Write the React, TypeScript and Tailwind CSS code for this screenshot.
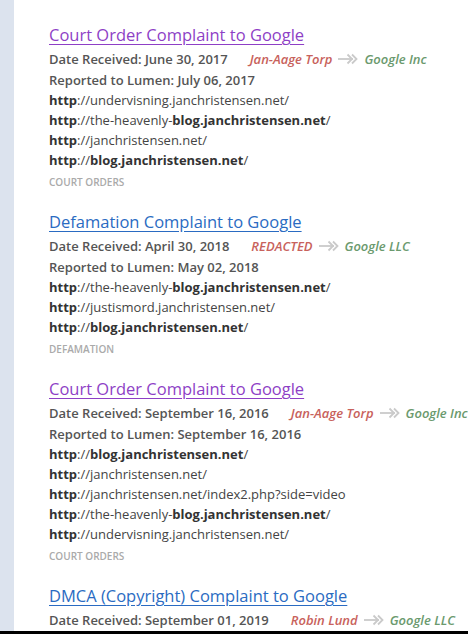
import React from 'react'

type Url = { pre: string; bold?: string; post?: string }

type Notice = {
  title: string
  visited: boolean
  received: string
  reported: string
  sender: string
  recipient: string
  urls: Url[]
  category: string
}

const notices: Notice[] = [
  {
    title: 'Court Order Complaint to Google',
    visited: true,
    received: 'June 30, 2017',
    reported: 'July 06, 2017',
    sender: 'Jan-Aage Torp',
    recipient: 'Google Inc',
    urls: [
      { pre: 'undervisning.janchristensen.net/' },
      { pre: 'the-heavenly-', bold: 'blog.janchristensen.net', post: '/' },
      { pre: 'janchristensen.net/' },
      { pre: '', bold: 'blog.janchristensen.net', post: '/' },
    ],
    category: 'Court Orders',
  },
  {
    title: 'Defamation Complaint to Google',
    visited: false,
    received: 'April 30, 2018',
    reported: 'May 02, 2018',
    sender: 'REDACTED',
    recipient: 'Google LLC',
    urls: [
      { pre: 'the-heavenly-', bold: 'blog.janchristensen.net', post: '/' },
      { pre: 'justismord.janchristensen.net/' },
      { pre: '', bold: 'blog.janchristensen.net', post: '/' },
    ],
    category: 'Defamation',
  },
  {
    title: 'Court Order Complaint to Google',
    visited: true,
    received: 'September 16, 2016',
    reported: 'September 16, 2016',
    sender: 'Jan-Aage Torp',
    recipient: 'Google Inc',
    urls: [
      { pre: '', bold: 'blog.janchristensen.net', post: '/' },
      { pre: 'janchristensen.net/' },
      { pre: 'janchristensen.net/index2.php?side=video' },
      { pre: 'the-heavenly-', bold: 'blog.janchristensen.net', post: '/' },
      { pre: 'undervisning.janchristensen.net/' },
    ],
    category: 'Court Orders',
  },
  {
    title: 'DMCA (Copyright) Complaint to Google',
    visited: false,
    received: 'September 01, 2019',
    reported: 'September 03, 2019',
    sender: 'Robin Lund',
    recipient: 'Google LLC',
    urls: [],
    category: 'DMCA',
  },
]

const Arrow = () => (
  <svg width="20" height="12" viewBox="0 0 20 12" className="mx-[6px] inline-block" fill="none" stroke="#cacaca" strokeWidth="1.8">
    <path d="M0 6h15" />
    <path d="M9.5 1.5l4.5 4.5-4.5 4.5" />
    <path d="M14 1.5l4.5 4.5-4.5 4.5" />
  </svg>
)

const NoticeItem = ({ n }: { n: Notice }) => (
  <div className="mb-[21px]">
    <a
      href="#"
      className={`block text-[16.5px] leading-[24px] font-medium underline underline-offset-[3px] ${n.visited ? 'text-[#8e3fc6]' : 'text-[#2a6bc2]'}`}
    >
      {n.title}
    </a>
    <div className="mt-[1px] flex items-center text-[13px] leading-[22px] font-semibold text-[#555]">
      <span>Date Received: {n.received}</span>
      <span className="ml-[22px] italic text-[#c8625c]">{n.sender}</span>
      <Arrow />
      <span className="italic text-[#6b9a6e]">{n.recipient}</span>
    </div>
    <div className="text-[13px] leading-[20px] font-semibold text-[#555]">Reported to Lumen: {n.reported}</div>
    {n.urls.map((u, i) => (
      <div key={i} className="text-[13px] leading-[20px] text-[#444]">
        <span className="font-bold text-[#333]">http</span>://{u.pre}
        {u.bold && <span className="font-bold text-[#333]">{u.bold}</span>}
        {u.post}
      </div>
    ))}
    <div className="mt-[5px] text-[10px] leading-[14px] uppercase text-[#aaa] font-semibold">{n.category}</div>
  </div>
)

export default function App() {
  return (
    <div className="h-[634px] w-[468px] overflow-hidden flex flex-col bg-black" style={{ fontFamily: '"Open Sans", sans-serif' }}>
      <div className="flex flex-1 min-h-0">
        <div className="w-[14px] bg-[#dce3ee]" />
        <div className="flex-1 bg-white pl-[35px] pt-[23px] overflow-hidden">
          {notices.map((n, i) => (
            <NoticeItem key={i} n={n} />
          ))}
        </div>
      </div>
      <div className="h-[3px] bg-black" />
    </div>
  )
}
